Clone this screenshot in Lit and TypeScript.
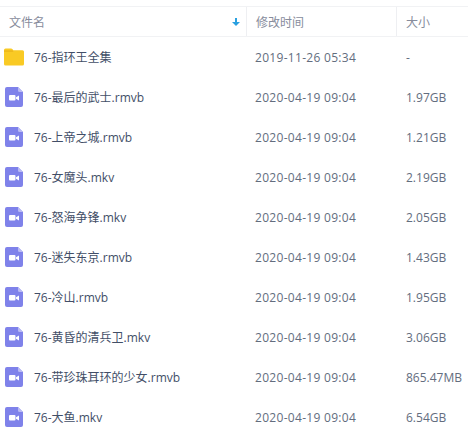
import { LitElement, html, css } from "lit";
import { customElement } from "lit/decorators.js";

const rows: [string, string, string][] = [
  ["76-指环王全集", "2019-11-26 05:34", "-"],
  ["76-最后的武士.rmvb", "2020-04-19 09:04", "1.97GB"],
  ["76-上帝之城.rmvb", "2020-04-19 09:04", "1.21GB"],
  ["76-女魔头.mkv", "2020-04-19 09:04", "2.19GB"],
  ["76-怒海争锋.mkv", "2020-04-19 09:04", "2.05GB"],
  ["76-迷失东京.rmvb", "2020-04-19 09:04", "1.43GB"],
  ["76-冷山.rmvb", "2020-04-19 09:04", "1.95GB"],
  ["76-黄昏的清兵卫.mkv", "2020-04-19 09:04", "3.06GB"],
  ["76-带珍珠耳环的少女.rmvb", "2020-04-19 09:04", "865.47MB"],
  ["76-大鱼.mkv", "2020-04-19 09:04", "6.54GB"],
];

const folder = html`<svg class="icon" viewBox="0 0 20 18" width="20" height="18">
  <path d="M0 2a1.500 1.500 0 0 1 1.500-1.500h5.500a2 2 0 0 1 1.500.8l.8.9h9.200a1.500 1.500 0 0 1 1.500 1.500v12.300a1.500 1.500 0 0 1-1.500 1.500h-17a1.500 1.500 0 0 1-1.500-1.500z" fill="#f9ca24"/>
  <path d="M0 4h9.500l-.9-1.700H0z" fill="#eeb91c"/>
</svg>`;

const video = html`<svg class="icon" viewBox="0 0 18 20" width="18" height="20">
  <path d="M2 0h11l5 5v13a2 2 0 0 1-2 2H2a2 2 0 0 1-2-2V2a2 2 0 0 1 2-2z" fill="#7f82ea"/>
  <path d="M13 0l5 5h-3.500a1.500 1.500 0 0 1-1.500-1.500z" fill="#b9baf4"/>
  <rect x="4" y="8" width="6.500" height="5.500" rx="1" fill="#fff"/>
  <path d="M11 10.300l3-1.800v5l-3-1.800z" fill="#fff"/>
</svg>`;

@customElement("app-root")
export class AppRoot extends LitElement {
  static styles = css`
    :host {
      display: block;
      width: 468px;
      height: 440px;
      overflow: hidden;
      background: #fff;
      font-family: "Open Sans", "Noto Sans CJK SC", sans-serif;
      font-size: 12px;
      color: #424e67;
    }
    .table {
      padding-top: 6px;
    }
    .grid {
      display: grid;
      grid-template-columns: 246px 150px 1fr;
    }
    .head {
      height: 29px;
      border-top: 1px solid #f1f2f4;
      border-bottom: 1px solid #f1f2f4;
      color: #878c9c;
    }
    .head > div {
      display: flex;
      align-items: center;
      justify-content: space-between;
      padding-left: 9px;
      padding-right: 6px;
      box-sizing: border-box;
    }
    .head > div + div {
      border-left: 1px solid #eeeff2;
    }
    .row {
      height: 40px;
      align-items: center;
      color: #636d7e;
    }
    .name {
      display: flex;
      align-items: center;
      gap: 10px;
      padding-left: 4px;
      color: #424e67;
      white-space: nowrap;
    }
    .icon {
      flex: none;
      display: block;
    }
    .iconbox {
      width: 20px;
      display: flex;
      justify-content: center;
    }
    .time {
      padding-left: 9px;
      letter-spacing: 0.3px;
    }
    .size {
      padding-left: 10px;
    }
  `;

  render() {
    return html`<div class="table">
      <div class="grid head">
        <div>文件名
          <svg viewBox="0 0 8 8" width="8" height="8"><path d="M3 0h2v4h3L4 8 0 4h3z" fill="#2aa0e0"/></svg>
        </div>
        <div>修改时间</div>
        <div>大小</div>
      </div>
      <div>
        ${rows.map(
          ([n, t, s], i) => html`<div class="grid row">
            <div class="name"><span class="iconbox">${i === 0 ? folder : video}</span>${n}</div>
            <div class="time">${t}</div>
            <div class="size">${s}</div>
          </div>`
        )}
      </div>
    </div>`;
  }
}
